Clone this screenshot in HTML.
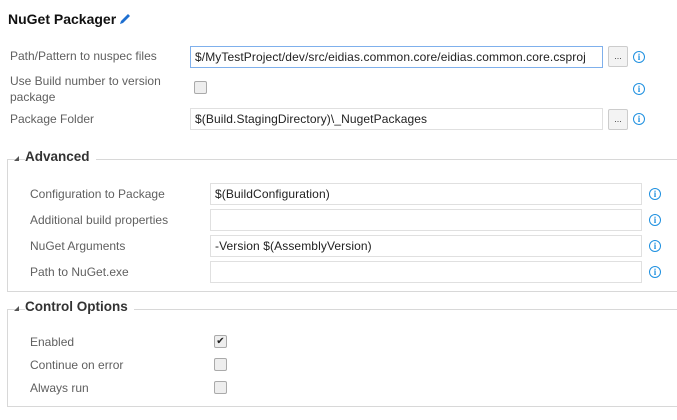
<!DOCTYPE html>
<html><head><style>
body{margin:0;width:677px;height:420px;background:#fff;font-family:"Liberation Sans",sans-serif;position:relative;overflow:hidden}
.a{position:absolute}
.lbl{position:absolute;font-size:12px;color:#606060;white-space:nowrap}
.inp{position:absolute;border:1px solid #e0e0e0;box-sizing:border-box;height:22px;font-size:12px;color:#222;padding:3px 0 0 4px;white-space:nowrap;overflow:hidden;letter-spacing:0.1px}
.btn{position:absolute;width:20px;height:21px;box-sizing:border-box;border:1px solid #ccc;border-radius:2px;background:#f3f3f3;font-size:9px;color:#444;text-align:center;line-height:18px}
.info{position:absolute;width:10px;height:10px;border:1.5px solid #1e90e0;border-radius:50%;color:#1e90e0;font-size:9px;font-weight:bold;text-align:center;line-height:10px;font-family:"Liberation Serif",serif}
.cb{position:absolute;width:11px;height:11px;border:1px solid #aaa;border-radius:2px;background:#eee;font-size:10px;line-height:11px;text-align:center;color:#222}
.hdr{position:absolute;font-size:13.5px;font-weight:bold;color:#333;background:#fff;padding-right:6px}
.tri{position:absolute;width:0;height:0;border-left:5px solid transparent;border-bottom:5px solid #555}
.fs{position:absolute;border:1px solid #d8d8d8;border-right:none}
</style></head><body>
<div class="a" style="left:8px;top:11px;font-size:14px;font-weight:bold;color:#111">NuGet Packager</div>
<svg class="a" style="left:118px;top:12px" width="14" height="14" viewBox="0 0 14 14"><path d="M2 12 L3 9 L10 2 L12 4 L5 11 Z" fill="#1e6fd0"/></svg>

<div class="lbl" style="left:10px;top:49px">Path/Pattern to nuspec files</div>
<div class="inp" style="left:190px;top:46px;width:413px;border-color:#7fb0ec">$/MyTestProject/dev/src/eidias.common.core/eidias.common.core.csproj</div>
<div class="btn" style="left:608px;top:46px">...</div>
<div class="info" style="left:633px;top:51px">i</div>

<div class="lbl" style="left:10px;top:73px;line-height:16px">Use Build number to version<br>package</div>
<div class="cb" style="left:194px;top:81px"></div>
<div class="info" style="left:633px;top:83px">i</div>

<div class="lbl" style="left:10px;top:112px">Package Folder</div>
<div class="inp" style="left:190px;top:108px;width:413px">$(Build.StagingDirectory)\_NugetPackages</div>
<div class="btn" style="left:608px;top:109px">...</div>
<div class="info" style="left:633px;top:113px">i</div>

<div class="fs" style="left:7px;top:159px;width:680px;height:131px"></div>
<div class="tri" style="left:14px;top:156px"></div>
<div class="hdr" style="left:25px;top:149px">Advanced</div>

<div class="lbl" style="left:30px;top:187px">Configuration to Package</div>
<div class="inp" style="left:210px;top:183px;width:432px">$(BuildConfiguration)</div>
<div class="info" style="left:649px;top:188px">i</div>
<div class="lbl" style="left:30px;top:213px">Additional build properties</div>
<div class="inp" style="left:210px;top:209px;width:432px"></div>
<div class="info" style="left:649px;top:214px">i</div>
<div class="lbl" style="left:30px;top:239px">NuGet Arguments</div>
<div class="inp" style="left:210px;top:235px;width:432px">-Version $(AssemblyVersion)</div>
<div class="info" style="left:649px;top:240px">i</div>
<div class="lbl" style="left:30px;top:265px">Path to NuGet.exe</div>
<div class="inp" style="left:210px;top:261px;width:432px"></div>
<div class="info" style="left:649px;top:266px">i</div>

<div class="fs" style="left:7px;top:309px;width:680px;height:96px"></div>
<div class="tri" style="left:14px;top:306px"></div>
<div class="hdr" style="left:25px;top:299px">Control Options</div>

<div class="lbl" style="left:30px;top:335px">Enabled</div>
<div class="cb" style="left:214px;top:335px">✔</div>
<div class="lbl" style="left:30px;top:358px">Continue on error</div>
<div class="cb" style="left:214px;top:358px"></div>
<div class="lbl" style="left:30px;top:381px">Always run</div>
<div class="cb" style="left:214px;top:381px"></div>
</body></html>
